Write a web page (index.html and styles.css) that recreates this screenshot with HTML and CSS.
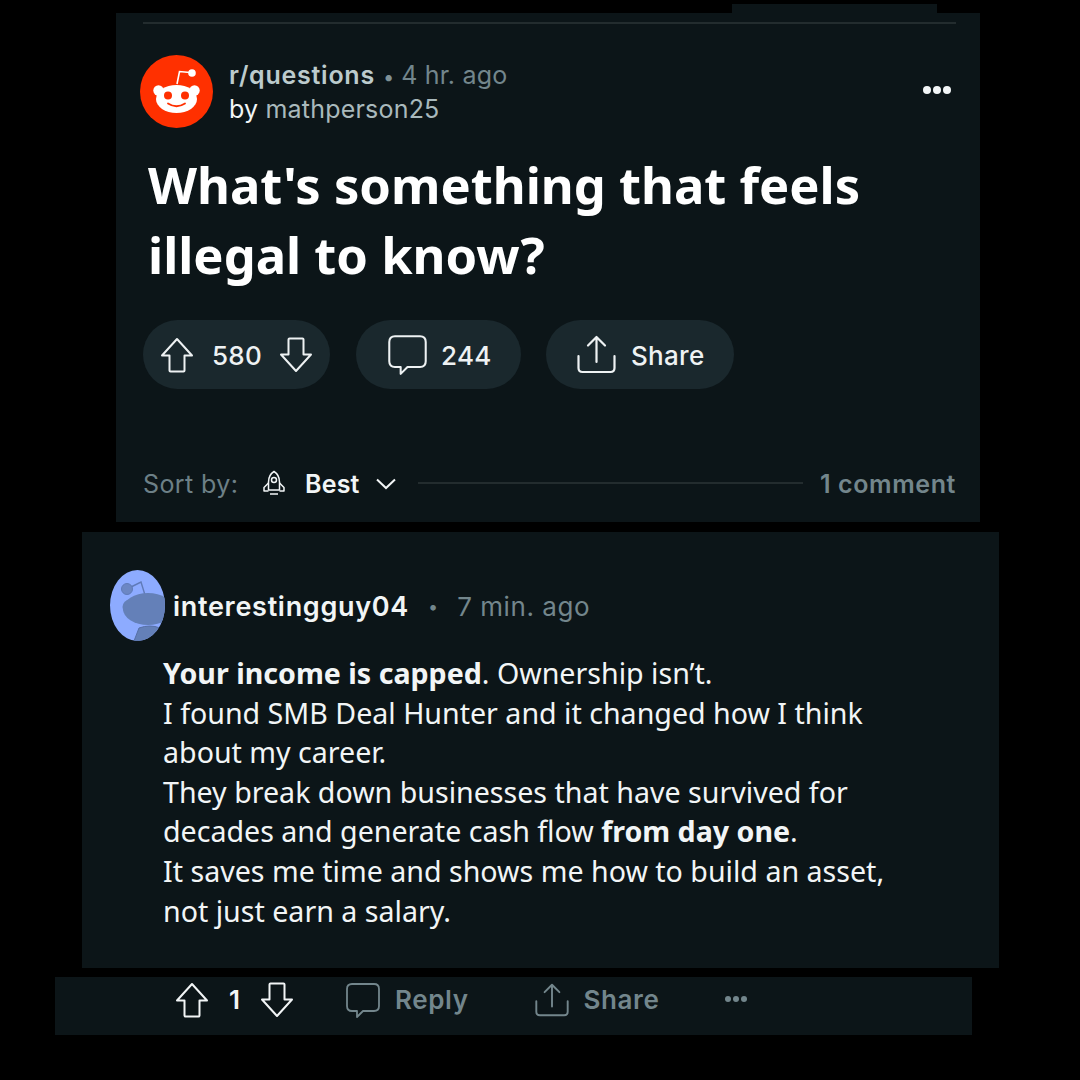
FILE: index.html
```html
<!DOCTYPE html>
<html lang="en">
<head>
<meta charset="UTF-8">
<meta name="viewport" content="width=device-width, initial-scale=1.0">
<title>Reddit Post</title>
<link rel="stylesheet" href="styles.css">
</head>
<body>
<svg class="icon-defs" width="0" height="0">
    <symbol id="i-up" viewBox="0 0 34 36">
        <path d="M17 2 L32 18.500 L24.500 18.500 L24.500 33.500 Q24.500 34.500 23.500 34.500 L10.500 34.500 Q9.500 34.500 9.500 33.500 L9.500 18.500 L2 18.500 Z" fill="none" stroke="currentColor" stroke-width="2" stroke-linejoin="round"/>
    </symbol>
    <symbol id="i-down" viewBox="0 0 34 36">
        <path d="M17 34 L2 17.500 L9.500 17.500 L9.500 2.500 Q9.500 1.500 10.500 1.500 L23.500 1.500 Q24.500 1.500 24.500 2.500 L24.500 17.500 L32 17.500 Z" fill="none" stroke="currentColor" stroke-width="2" stroke-linejoin="round"/>
    </symbol>
    <symbol id="i-comment" viewBox="0 0 34 36">
        <path d="M6 2 H28 Q33 2 33 7 V24 Q33 29 28 29 H17 L11 35 V29 H6 Q1 29 1 24 V7 Q1 2 6 2 Z" fill="none" stroke="currentColor" stroke-width="1.800" stroke-linejoin="round"/>
    </symbol>
    <symbol id="i-share" viewBox="0 0 39 39">
        <path d="M19.500 27 V2.500 M11 10.500 L19.500 2 L28 10.500 M1.500 21 V33 Q1.500 37 5.500 37 H33.500 Q37.500 37 37.500 33 V21" fill="none" stroke="currentColor" stroke-width="2.200" stroke-linecap="round" stroke-linejoin="round"/>
    </symbol>
</svg>

<div class="tab"></div>

<section class="post">
    <div class="rule"></div>
    <div class="post-head">
        <svg class="snoo" viewBox="0 0 73 73">
            <circle cx="36.500" cy="36.500" r="36.500" fill="#ff3000"/>
            <path d="M37 29 L39.500 16.500 L50 17.500" fill="none" stroke="#fff" stroke-width="1.600"/>
            <circle cx="52" cy="18" r="3.800" fill="#fff"/>
            <circle cx="18.500" cy="35.500" r="5.200" fill="#fff"/>
            <circle cx="54.500" cy="35.500" r="5.200" fill="#fff"/>
            <ellipse cx="36.500" cy="44" rx="20.500" ry="14" fill="#fff"/>
            <circle cx="28" cy="40.500" r="4" fill="#ff3000"/>
            <circle cx="45" cy="40.500" r="4" fill="#ff3000"/>
            <path d="M28 48.500 Q36.500 54 45 48.500" fill="none" stroke="#ff3000" stroke-width="1.800" stroke-linecap="round"/>
        </svg>
        <div class="post-meta">
            <div class="meta-line"><b class="sub">r/questions</b><span class="dot-sep">•</span><span class="muted">4 hr. ago</span></div>
            <div class="meta-line by">by <span class="author">mathperson25</span></div>
        </div>
        <div class="more"><i></i><i></i><i></i></div>
    </div>
    <h1 class="title">What's something that feels<br>illegal to know?</h1>
    <div class="pills">
        <div class="pill pill-vote">
            <svg class="ico"><use href="#i-up"/></svg>
            <span>580</span>
            <svg class="ico"><use href="#i-down"/></svg>
        </div>
        <div class="pill pill-comments">
            <svg class="ico ico-big"><use href="#i-comment"/></svg>
            <span>244</span>
        </div>
        <div class="pill pill-share">
            <svg class="ico ico-big"><use href="#i-share"/></svg>
            <span>Share</span>
        </div>
    </div>
    <div class="sort-row">
        <span class="sort-label">Sort by:</span>
        <svg class="rocket" viewBox="0 0 24 26">
            <path d="M12 1.500 C8 4 6.500 8 6.500 12 V20 H17.500 V12 C17.500 8 16 4 12 1.500 Z" fill="none" stroke="currentColor" stroke-width="1.500" stroke-linejoin="round"/>
            <circle cx="12" cy="10" r="2.500" fill="none" stroke="currentColor" stroke-width="1.500"/>
            <path d="M6.500 13 L2 17.500 V21 H6.500 M17.500 13 L22 17.500 V21 H17.500 M8 24 H16" fill="none" stroke="currentColor" stroke-width="1.500" stroke-linejoin="round"/>
        </svg>
        <b class="sort-value">Best</b>
        <svg class="chevron" viewBox="0 0 20 12"><path d="M1 1.500 L10 10 L19 1.500" fill="none" stroke="currentColor" stroke-width="2"/></svg>
        <div class="sort-line"></div>
        <b class="count">1 comment</b>
    </div>
</section>

<section class="comment">
    <div class="comment-head">
        <svg class="avatar" viewBox="0 0 55 71">
            <defs><clipPath id="egg"><ellipse cx="27.500" cy="35.500" rx="27.500" ry="35.500"/></clipPath></defs>
            <g clip-path="url(#egg)">
                <rect width="55" height="71" fill="#8dabff"/>
                <path d="M35 25 L31 12 L21 17" fill="none" stroke="#5f7ab8" stroke-width="1.400"/>
                <circle cx="17" cy="19" r="5.500" fill="#6c87c4" stroke="#5f7ab8"/>
                <circle cx="20" cy="37" r="7.500" fill="#6480b8"/>
                <ellipse cx="38" cy="39" rx="25" ry="16" fill="#6480b8"/>
                <path d="M24 71 L29 58 Q40 54 50 58 L52 71 Z" fill="#6480b8" stroke="#566fa6"/>
            </g>
        </svg>
        <b class="username">interestingguy04</b>
        <span class="comment-dot">•</span>
        <span class="muted comment-time">7 min. ago</span>
    </div>
    <div class="comment-body">
        <b>Your income is capped</b>. Ownership isn’t.<br>
        I found SMB Deal Hunter and it changed how I think<br>
        about my career.<br>
        They break down businesses that have survived for<br>
        decades and generate cash flow <b>from day one</b>.<br>
        It saves me time and shows me how to build an asset,<br>
        not just earn a salary.
    </div>
</section>

<footer class="actions">
    <svg class="ico act-up"><use href="#i-up"/></svg>
    <b class="act-score">1</b>
    <svg class="ico act-down"><use href="#i-down"/></svg>
    <svg class="ico act-gray act-comment"><use href="#i-comment"/></svg>
    <b class="act-label act-reply">Reply</b>
    <svg class="ico act-gray act-share"><use href="#i-share"/></svg>
    <b class="act-label">Share</b>
    <div class="act-more"><i></i><i></i><i></i></div>
</footer>
</body>
</html>
```

FILE: styles.css
```css
body {
    margin: 0;
    background: #000;
    color: #f2f5f6;
    font-family: Inter, "Liberation Sans", sans-serif;
    height: 1080px;
    overflow: hidden;
}
.icon-defs {
    display: block;
    height: 0;
}
.tab {
    width: 205px;
    height: 9px;
    margin: 4px 0 0 732px;
    background: #0c1518;
}
.post {
    width: 864px;
    height: 509px;
    margin-left: 116px;
    box-sizing: border-box;
    padding-top: 9px;
    background: #0c1518;
}
.rule {
    height: 2px;
    margin: 0 24px 0 27px;
    background: #232c2e;
}
.post-head {
    display: flex;
    align-items: center;
    height: 73px;
    margin: 31px 0 0 24px;
}
.snoo {
    width: 73px;
    height: 73px;
    flex: none;
}
.post-meta {
    margin-left: 16px;
    font-size: 25px;
}
.meta-line {
    height: 34px;
    line-height: 34px;
    white-space: nowrap;
}
.sub {
    font-weight: 600;
    color: #bccbcd;
    letter-spacing: 0.75px;
}
.dot-sep {
    margin: 0 7px 0 8px;
    color: #7f9196;
    font-size: 20px;
}
.muted {
    color: #73868c;
    letter-spacing: 0.2px;
}
.by {
    color: #f2f5f6;
    letter-spacing: 0.2px;
}
.author {
    color: #a9b9bc;
}
.more, .act-more {
    display: flex;
}
.more {
    gap: 2px;
    margin: -3px 0 0 auto;
    padding-right: 29px;
}
.more i {
    width: 8px;
    height: 8px;
    border-radius: 50%;
    background: #f2f5f6;
}
.title {
    margin: 22px 0 0 32px;
    font-family: "Noto Sans", sans-serif;
    font-size: 50.7px;
    font-weight: 700;
    line-height: 70px;
    color: #fff;
}
.pills {
    display: flex;
    margin: 30px 0 0 27px;
}
.pill {
    display: flex;
    align-items: center;
    height: 69px;
    box-sizing: border-box;
    border-radius: 35px;
    background: #1a282d;
    font-size: 26px;
    font-weight: 500;
    color: #eef2f3;
}
.pill span {
    padding-top: 2px;
    letter-spacing: 0.3px;
}
.ico {
    width: 34px;
    height: 36px;
    flex: none;
}
.pill-vote {
    width: 187px;
    padding-left: 17px;
    gap: 18px;
}
.pill-vote span {
    width: 49px;
}
.pill-comments {
    width: 165px;
    margin-left: 26px;
    padding-left: 32px;
    gap: 14px;
}
.pill-share {
    width: 188px;
    margin-left: 25px;
    padding-left: 31px;
    gap: 15px;
}
.pill .ico-big {
    width: 39px;
    height: 41px;
}
.sort-row {
    display: flex;
    align-items: center;
    height: 40px;
    margin: 75px 24px 0 27px;
    font-size: 25px;
}
.sort-label {
    width: 119px;
    color: #6d8087;
    letter-spacing: 0.4px;
}
.rocket {
    width: 24px;
    height: 26px;
    margin-top: -2px;
}
.sort-value {
    margin-left: 19px;
    font-weight: 600;
    letter-spacing: 0.2px;
}
.chevron {
    width: 20px;
    height: 12px;
    margin-left: 16px;
}
.sort-line {
    flex: 1;
    height: 2px;
    margin: -2px 17px 0 22px;
    background: #232c2e;
}
.count {
    font-weight: 600;
    color: #73868c;
    letter-spacing: 0.6px;
}
.comment {
    width: 917px;
    height: 436px;
    margin: 10px 0 0 82px;
    box-sizing: border-box;
    padding-top: 38px;
    background: #0c1518;
}
.comment-head {
    display: flex;
    align-items: center;
    height: 71px;
    margin-left: 28px;
    font-size: 27px;
}
.avatar {
    width: 55px;
    height: 71px;
    flex: none;
}
.username {
    margin-left: 8px;
    padding-top: 2px;
    font-weight: 600;
    letter-spacing: 0.7px;
}
.comment-dot {
    margin: 0 19px 0 19px;
    padding-top: 2px;
    font-size: 18px;
    color: #73868c;
}
.comment-time {
    padding-top: 2px;
    font-size: 26px;
    letter-spacing: 0.55px;
}
.comment-body {
    margin: 12px 0 0 81px;
    font-family: "Noto Sans", sans-serif;
    font-size: 28.6px;
    line-height: 39.6px;
    color: #f2f5f6;
    white-space: nowrap;
}
.actions {
    display: flex;
    align-items: center;
    width: 917px;
    height: 58px;
    margin: 9px 0 0 55px;
    box-sizing: border-box;
    padding: 0 0 12px 120px;
    background: #0c1518;
    font-size: 26px;
    color: #f2f5f6;
}
.act-score {
    margin: 0 20px 2px;
    font-weight: 600;
}
.act-gray {
    color: #73868c;
}
.act-comment {
    margin-left: 52px;
}
.act-label {
    margin: 0 0 2px 15px;
    font-weight: 600;
    color: #73868c;
    letter-spacing: 0.6px;
}
.act-share {
    margin-left: 66px;
}
.act-more {
    gap: 2px;
    margin-left: 66px;
    margin-bottom: 2px;
}
.act-more i {
    width: 6px;
    height: 6px;
    border-radius: 50%;
    background: #73868c;
}
```
